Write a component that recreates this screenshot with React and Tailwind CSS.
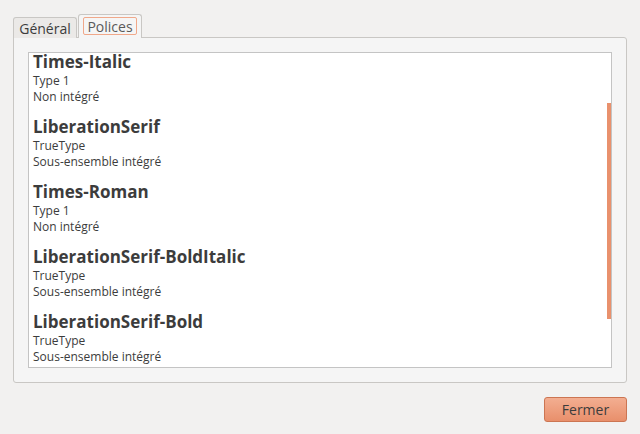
export default function App() {
  const fonts = [
    { name: "Times-Italic", type: "Type 1", emb: "Non intégré" },
    { name: "LiberationSerif", type: "TrueType", emb: "Sous-ensemble intégré" },
    { name: "Times-Roman", type: "Type 1", emb: "Non intégré" },
    { name: "LiberationSerif-BoldItalic", type: "TrueType", emb: "Sous-ensemble intégré" },
    { name: "LiberationSerif-Bold", type: "TrueType", emb: "Sous-ensemble intégré" },
  ];
  return (
    <div className="w-[640px] h-[434px] bg-[#f2f1f0] text-[#3c3c3c] font-['Open_Sans',sans-serif] flex flex-col overflow-hidden">
      <div className="px-[13px] pt-[13px] flex flex-col">
        <div className="flex items-end h-[24px] relative z-10">
          <div className="w-[64px] h-[21px] mb-[-1px] border border-[#c9c7c4] border-b-0 rounded-t-[3px] bg-[#ebe9e7] flex items-center justify-center text-[14px]">
            Général
          </div>
          <div className="ml-[1px] w-[64px] h-[24px] mb-[-1px] border border-[#c9c7c4] border-b-0 rounded-t-[3px] bg-[#f5f5f5] flex items-start justify-center pt-[2px]">
            <div className="h-[18px] px-[3px] border border-[#f0a88a] rounded-[2px] flex items-center text-[14px] text-[#5a5a5a]">
              Polices
            </div>
          </div>
        </div>
        <div className="h-[346px] border border-[#c9c7c4] rounded-b-[3px] rounded-tr-[3px] bg-[#f5f5f5] pt-[14px] px-[14px]">
          <div className="h-[316px] border border-[#c4c4c4] bg-white relative">
            <div className="flex flex-col pl-[4px] -mt-[1px]">
              {fonts.map((f) => (
                <div key={f.name} className="h-[65px] flex flex-col">
                  <div className="text-[17px] font-bold leading-[20px] h-[21px]">{f.name}</div>
                  <div className="text-[12px] leading-[16px]">{f.type}</div>
                  <div className="text-[12px] leading-[16px]">{f.emb}</div>
                </div>
              ))}
            </div>
            <div className="absolute right-0 top-[50px] w-[4px] h-[216px] bg-[#e9916d]" />
          </div>
        </div>
      </div>
      <div className="flex justify-end pr-[13px] pt-[14px]">
        <button className="w-[83px] h-[25px] rounded-[3px] border border-[#cc7552] bg-gradient-to-b from-[#f3ae91] to-[#e88f6b] text-[14px] text-[#3c3c3c] flex items-center justify-center">
          Fermer
        </button>
      </div>
    </div>
  );
}
